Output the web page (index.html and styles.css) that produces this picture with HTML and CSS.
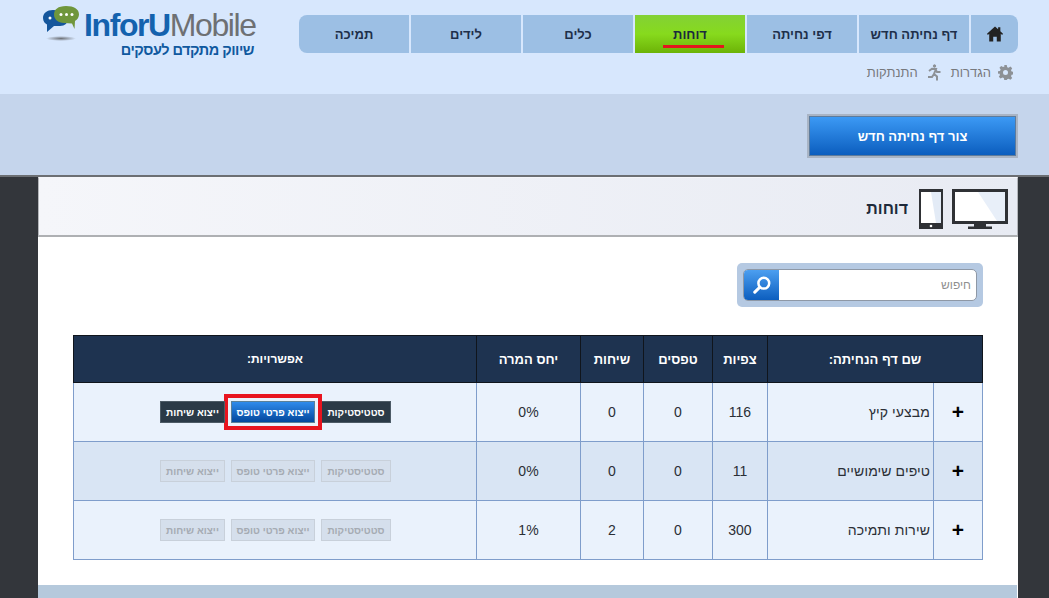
FILE: index.html
```html
<!DOCTYPE html>
<html lang="he" dir="rtl">
<head>
<meta charset="utf-8">
<title>דוחות</title>
<link rel="stylesheet" href="styles.css">
</head>
<body>
<header class="top">
  <div class="top-right">
    <nav class="nav">
      <a class="nav-home"><svg width="16" height="16" viewBox="0 0 18 17"><path fill="#222" d="M9 0 0 8.300 1 9.500 2.500 8.200V17H7v-5.500h4V17h4.500V8.200L17 9.500 18 8.300 15 5.500V1h-2.500v2.200z"/></svg></a>
      <a class="nav-item">דף נחיתה חדש</a>
      <a class="nav-item">דפי נחיתה</a>
      <a class="nav-item nav-active"><span class="nav-label">דוחות</span></a>
      <a class="nav-item">כלים</a>
      <a class="nav-item">לידים</a>
      <a class="nav-item">תמיכה</a>
    </nav>
    <div class="sublinks">
      <svg class="gear" width="15" height="15" viewBox="0 0 24 24"><path fill="#8d9196" fill-rule="evenodd" d="M10 0h4l.7 3.400 2.300 1 2.900-1.900 2.800 2.800-1.900 2.900 1 2.300 3.200.5v4l-3.200.7-1 2.300 1.900 2.900-2.800 2.800-2.900-1.900-2.300 1L14 24h-4l-.7-3.200-2.300-1-2.900 1.900-2.800-2.800 1.900-2.900-1-2.300L0 14v-4l3.200-.6 1-2.300-1.900-2.900 2.800-2.800 2.900 1.900 2.300-1zM12 8a4 4 0 1 0 0 8 4 4 0 0 0 0-8z"/></svg>
      <span class="sublink">הגדרות</span>
      <svg class="runner" width="14" height="17" viewBox="0 0 14 17"><g fill="none" stroke="#8d9196" stroke-width="2"><circle cx="7.500" cy="2" r="1.200" fill="#8d9196" stroke-width="1"/><path d="M2 7 5 4.800 9 5 7 10 10 12.500V16.500M7 10 5 13H1M8.500 5.500 10 8H13.500"/></g></svg>
      <span class="sublink">התנתקות</span>
    </div>
  </div>
  <div class="logo">
    <div class="logo-row">
      <span class="logo-name"><span class="logo-blue">InforU</span><span class="logo-gray">Mobile</span></span>
      <svg class="logo-mark" width="37" height="36" viewBox="0 0 37 36">
        <defs><radialGradient id="shade"><stop offset="0" stop-color="#6e7278"/><stop offset="1" stop-color="#6e7278" stop-opacity="0"/></radialGradient></defs>
        <ellipse cx="18" cy="32.500" rx="15" ry="2.500" fill="url(#shade)"/>
        <path fill="#14569c" d="M10 4C4 4 0 7 0 12c0 3.500 2 5.500 4 6.500L4 26 11 20h6c5 0 8-3 8-8s-5-8-15-8z"/>
        <path fill="#6f963c" d="M23 0c-8 0-12 3.500-12 8.500S15 16.500 21 17l8 .5L31.500 23 32 15c2.500-1.500 4-4 4-6.500C36 3 31 0 23 0z"/>
        <g fill="#fff"><circle cx="7" cy="12" r="1.500"/><circle cx="18" cy="8.500" r="1.500"/><circle cx="23.500" cy="8.500" r="1.500"/><circle cx="29" cy="8.500" r="1.500"/></g>
      </svg>
    </div>
    <div class="logo-tag">שיווק מתקדם לעסקים</div>
  </div>
</header>
<section class="band">
  <a class="create-btn">צור דף נחיתה חדש</a>
</section>
<main class="page">
  <div class="title-bar">
    <svg width="56" height="40" viewBox="0 0 56 40"><path fill="#2f3135" d="M0 0h56v35H34v2.500h6V40H16v-2.500h6V35H0z"/><path fill="#fff" d="M3 3h50v29H3z"/><path fill="#e8eff9" d="M26 3h27v29h-8z"/></svg>
    <svg width="24" height="40" viewBox="0 0 24 40"><path fill="#2f3135" d="M0 0h24v40H0z"/><path fill="#fff" d="M2 3h20v31H2z"/><path fill="#e3ebf6" d="M12 3h10v31h-5z"/><circle cx="12" cy="37" r="1.300" fill="#fff"/></svg>
    <h1 class="title">דוחות</h1>
  </div>
  <div class="content">
    <div class="search-row">
      <div class="search">
        <div class="search-inner">
          <span class="search-text">חיפוש</span>
          <span class="search-btn"><svg width="18" height="18" viewBox="0 0 20 20"><circle cx="12" cy="8" r="6" fill="none" stroke="#fff" stroke-width="2.800"/><path d="M7.500 12.500 2 18" stroke="#fff" stroke-width="3.400" stroke-linecap="round"/></svg></span>
        </div>
      </div>
    </div>
    <table class="grid">
      <colgroup>
        <col class="c-plus"><col class="c-name"><col class="c-views"><col class="c-forms"><col class="c-chats"><col class="c-rate"><col>
      </colgroup>
      <thead>
        <tr><th colspan="2">שם דף הנחיתה:</th><th>צפיות</th><th>טפסים</th><th>שיחות</th><th>יחס המרה</th><th class="th-small">אפשרויות:</th></tr>
      </thead>
      <tbody>
        <tr>
          <td class="plus">+</td><td class="name">מבצעי קיץ</td><td>116</td><td>0</td><td>0</td><td>0%</td>
          <td><div class="actions"><a class="act act-stat act-dark">סטטיסטיקות</a><span class="act-hl"><a class="act act-form act-blue">ייצוא פרטי טופס</a></span><a class="act act-chat act-dark">ייצוא שיחות</a></div></td>
        </tr>
        <tr class="alt">
          <td class="plus">+</td><td class="name">טיפים שימושיים</td><td>11</td><td>0</td><td>0</td><td>0%</td>
          <td><div class="actions"><a class="act act-stat act-off">סטטיסטיקות</a><a class="act act-form act-off">ייצוא פרטי טופס</a><a class="act act-chat act-off">ייצוא שיחות</a></div></td>
        </tr>
        <tr>
          <td class="plus">+</td><td class="name">שירות ותמיכה</td><td>300</td><td>0</td><td>2</td><td>1%</td>
          <td><div class="actions"><a class="act act-stat act-off">סטטיסטיקות</a><a class="act act-form act-off">ייצוא פרטי טופס</a><a class="act act-chat act-off">ייצוא שיחות</a></div></td>
        </tr>
      </tbody>
    </table>
  </div>
  <div class="foot"></div>
</main>
</body>
</html>
```
FILE: styles.css
```css
* { box-sizing: border-box; }
html, body { margin: 0; padding: 0; }
body { height: 598px; overflow: hidden; background: #33363b; font-family: "Liberation Sans", Arial, sans-serif; color: #1e2a3a; }

.top { height: 94px; background: #d7e7fd; display: flex; justify-content: space-between; padding: 15px 31px 0 0; }
.top-right { width: 719px; }
.nav { display: flex; gap: 2px; height: 38px; }
.nav-home { width: 47px; background: #9cbfe4; border-radius: 0 8px 8px 0; display: flex; align-items: center; justify-content: center; }
.nav-item { width: 110px; background: #9cbfe4; color: #1e2f4a; font-size: 13px; font-weight: bold; display: flex; align-items: center; justify-content: center; }
.nav-item:last-child { border-radius: 8px 0 0 8px; }
.nav-active { background: linear-gradient(#83d135, #87da1d 50%, #6cb307); color: #1b2a3d; }
.nav-label { position: relative; }
.nav-label::after { content: ""; position: absolute; top: 18px; left: -10px; right: -17px; height: 3px; background: #e3161e; }
.sublinks { display: flex; align-items: center; gap: 5px; height: 20px; margin-top: 9px; padding-right: 5px; color: #77797d; font-size: 13px; }
.sublinks .gear { margin-left: 2px; }
.sublinks .runner { margin: 0 5px 0 4px; }
.logo { width: 214px; margin: -4px 0 0 43px; }
.logo-row { display: flex; align-items: flex-start; direction: ltr; height: 32px; }
.logo-mark { order: -1; margin-top: -5px; flex: none; }
.logo-name { font-size: 32px; line-height: 32px; letter-spacing: -1.400px; font-weight: bold; white-space: nowrap; margin-left: 4px; margin-top: -2px; }
.logo-blue { color: #1462ae; }
.logo-gray { color: #6e7073; font-weight: normal; }
.logo-tag { color: #10599f; font-size: 14.500px; letter-spacing: -.5px; font-weight: bold; text-align: right; padding: 0 3px 0 0; line-height: 18px; margin-top: -2px; }

.band { height: 81px; background: #c5d5ec; display: flex; align-items: flex-start; padding: 20px 31px 0 0; }
.create-btn { width: 211px; height: 44px; border: 2px solid #a9b4c4; outline: 1px solid #5d7b9c; outline-offset: -3px; background: linear-gradient(#3d9bf6, #0a5cbd); color: #fff; font-size: 13px; font-weight: bold; display: flex; align-items: center; justify-content: center; }

.page { width: 980px; margin: 0 31px 0 0; background: #fff; border-top: 2px solid #6c6f73; height: 423px; display: flex; flex-direction: column; position: relative; }
.page::before { content: ""; position: absolute; top: -2px; right: -31px; left: -38px; height: 2px; background: #6c6f73; }
.title-bar { height: 60px; background: linear-gradient(to left, #e8ebf3, #f5f6fa); border: 1px solid #b4b6ba; border-top-color: #f5f6fa; border-bottom: 2px solid #aeb0b3; display: flex; align-items: center; gap: 9px; padding: 4px 9px 0 0; }
.title { font-size: 16px; font-weight: bold; margin: 0 2px 0 0; color: #1e2a3a; }
.content { flex: 1; padding: 26px 35px 0; }
.search-row { display: flex; justify-content: flex-start; }
.search { width: 246px; height: 44px; background: #b5c9e2; border-radius: 5px; padding: 6px; }
.search-inner { height: 32px; background: #fff; border: 1px solid #8e98a6; border-radius: 5px; display: flex; justify-content: space-between; align-items: center; overflow: hidden; padding-right: 5px; }
.search-text { color: #8f8f8f; font-size: 12px; }
.search-btn { width: 35px; height: 32px; background: linear-gradient(#4ea1f2, #0a5cbd); display: flex; align-items: center; justify-content: center; }

.grid { width: 910px; margin-top: 28px; border-collapse: collapse; table-layout: fixed; font-size: 14px; }
.c-plus { width: 49px; }
.c-name { width: 166px; }
.c-views { width: 55px; }
.c-forms { width: 69px; }
.c-chats { width: 63px; }
.c-rate { width: 104px; }
.grid th { height: 47px; background: #1e3350; color: #fff; font-size: 13px; font-weight: bold; border: 1px solid #10151c; text-align: center; padding: 0; }
.grid .th-small { font-size: 12px; }
.grid td { height: 59px; background: #eaf2fc; border: 1px solid #7f9dcb; text-align: center; padding: 0; color: #2b2f36; }
.grid .alt td { background: #d9e5f4; }
.grid .plus { font-size: 21px; font-weight: bold; color: #000; }
.grid .name { text-align: right; padding-right: 3px; font-size: 14px; letter-spacing: .1px; }
.actions { display: flex; justify-content: center; align-items: center; gap: 6px; padding-left: 1px; }
.act { display: inline-flex; align-items: center; justify-content: center; height: 22px; font-size: 10px; font-weight: bold; white-space: nowrap; }
.act-stat { width: 70px; }
.act-form { width: 84px; }
.act-chat { width: 65px; }
.act-dark { background: #2b3a47; border: 1px solid #4d5b66; color: #fff; }
.act-blue { background: linear-gradient(#2f8bec, #03479c); border: 1px solid #5b8098; color: #fff; }
.act-hl { display: flex; outline: 4px solid #e8141f; outline-offset: 3px; }
.act-off { background: #d5dfec; border: 1px solid #c8d0da; color: #a5abb3; }
.foot { height: 13px; margin-top: auto; background: #b5c9dc; margin-right: 1px; }
```
